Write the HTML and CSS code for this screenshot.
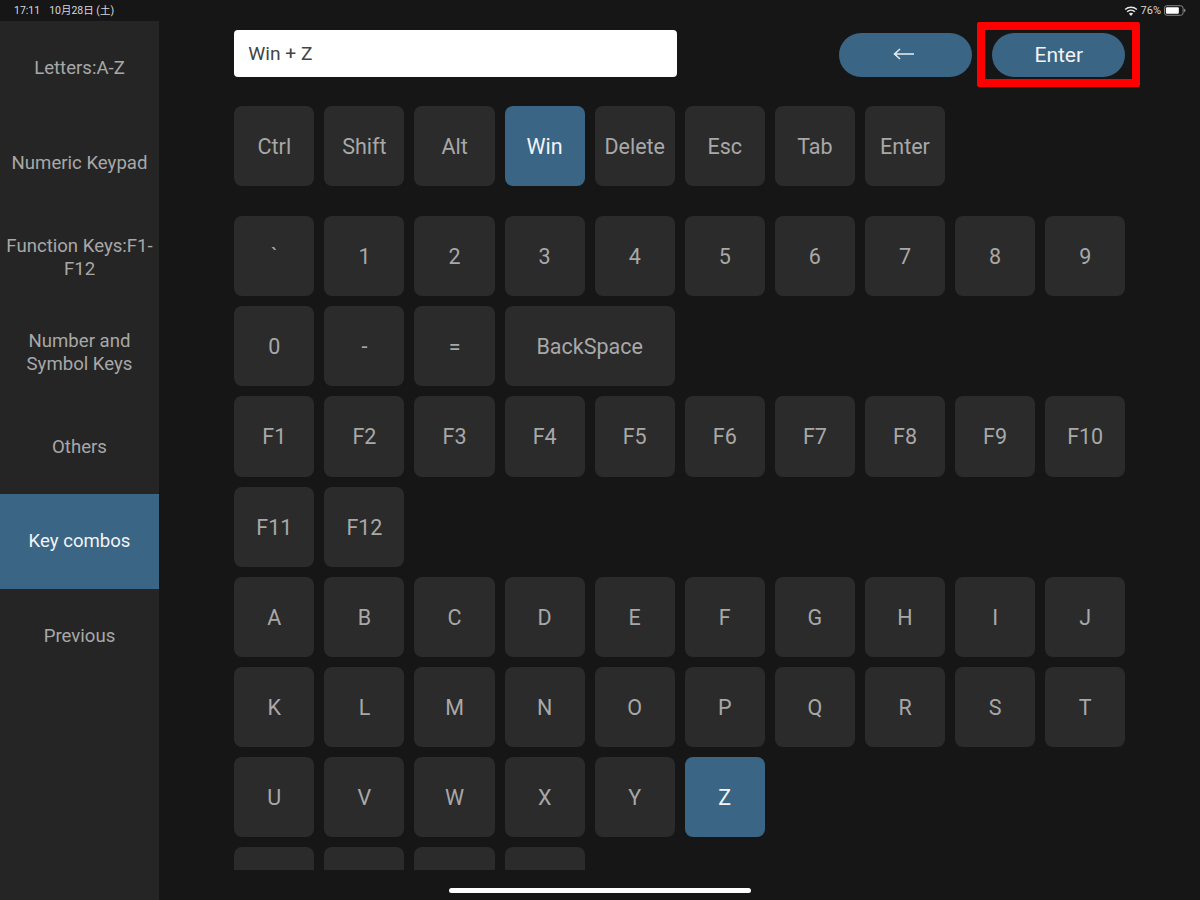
FILE: index.html
```html
<!DOCTYPE html>
<html lang="ja">
<head>
<meta charset="utf-8">
<title>Key combos</title>
<link rel="stylesheet" href="styles.css">
</head>
<body>
<div class="screen">
  <header class="status">
    <div class="status-left"><span>17:11</span><span>10月28日 (土)</span></div>
    <div class="status-right">
      <svg class="wifi" viewBox="0 0 14 10" width="14" height="10"><path d="M7 10 4.9 7.6a3.2 3.2 0 0 1 4.2 0Z" fill="#e8e8e8"/><path d="M3.6 6.3a5 5 0 0 1 6.8 0l1-1.1a6.6 6.6 0 0 0-8.8 0Z" fill="#e8e8e8"/><path d="M1.6 4.1a8 8 0 0 1 10.8 0l1-1.1a9.6 9.6 0 0 0-12.8 0Z" fill="#e8e8e8"/></svg>
      <span>76%</span>
      <svg class="battery" viewBox="0 0 23 11" width="22" height="11"><rect x=".5" y=".5" width="19.5" height="10" rx="2.6" fill="none" stroke="#8a8a8a"/><rect x="2" y="2" width="13.5" height="7" rx="1.2" fill="#fff"/><path d="M21 3.8c1 .2 1.5.9 1.5 1.7s-.5 1.5-1.5 1.7Z" fill="#8a8a8a"/></svg>
    </div>
  </header>
  <div class="layout">
    <nav class="sidebar">
      <div class="nav-item">Letters:A-Z</div>
      <div class="nav-item">Numeric Keypad</div>
      <div class="nav-item">Function Keys:F1-F12</div>
      <div class="nav-item">Number and Symbol Keys</div>
      <div class="nav-item">Others</div>
      <div class="nav-item active">Key combos</div>
      <div class="nav-item">Previous</div>
    </nav>
    <main class="main">
      <div class="topbar">
        <div class="input">Win + Z</div>
        <div class="actions">
          <div class="pill back"><svg viewBox="0 0 21 12" width="21" height="12"><path d="M21 6H2M7 1 1.5 6 7 11" fill="none" stroke="#e6edf2" stroke-width="1.5"/></svg></div>
          <div class="pill">Enter</div>
        </div>
      </div>
      <div class="keys modifiers">
        <div class="key">Ctrl</div><div class="key">Shift</div><div class="key">Alt</div><div class="key on">Win</div><div class="key">Delete</div><div class="key">Esc</div><div class="key">Tab</div><div class="key">Enter</div>
      </div>
      <div class="keys">
        <div class="key">`</div><div class="key">1</div><div class="key">2</div><div class="key">3</div><div class="key">4</div><div class="key">5</div><div class="key">6</div><div class="key">7</div><div class="key">8</div><div class="key">9</div>
        <div class="key">0</div><div class="key">-</div><div class="key">=</div><div class="key wide">BackSpace</div>
        <div class="key first">F1</div><div class="key">F2</div><div class="key">F3</div><div class="key">F4</div><div class="key">F5</div><div class="key">F6</div><div class="key">F7</div><div class="key">F8</div><div class="key">F9</div><div class="key">F10</div>
        <div class="key">F11</div><div class="key">F12</div>
        <div class="key first">A</div><div class="key">B</div><div class="key">C</div><div class="key">D</div><div class="key">E</div><div class="key">F</div><div class="key">G</div><div class="key">H</div><div class="key">I</div><div class="key">J</div>
        <div class="key">K</div><div class="key">L</div><div class="key">M</div><div class="key">N</div><div class="key">O</div><div class="key">P</div><div class="key">Q</div><div class="key">R</div><div class="key">S</div><div class="key">T</div>
        <div class="key">U</div><div class="key">V</div><div class="key">W</div><div class="key">X</div><div class="key">Y</div><div class="key on">Z</div>
        <div class="key first"></div><div class="key"></div><div class="key"></div><div class="key"></div>
      </div>
    </main>
  </div>
  <div class="highlight"></div>
  <div class="home"></div>
</div>
</body>
</html>
```
FILE: styles.css
```css
* { box-sizing: border-box; }
html, body { margin: 0; padding: 0; }
body { background: #161616; }
.screen {
  position: relative;
  width: 1200px;
  height: 900px;
  overflow: hidden;
  background: #161616;
  font-family: Roboto, "Noto Sans CJK JP", sans-serif;
  color: #a8a8a8;
}
.status {
  height: 21px;
  padding: 0 14px;
  display: flex;
  justify-content: space-between;
  align-items: center;
  font-size: 10.5px;
  line-height: 12px;
  color: #d8d8d8;
}
.status-left { display: flex; gap: 9px; }
.status-right { display: flex; align-items: center; gap: 3px; font-size: 11px; }
.layout { display: flex; height: 879px; }
.sidebar { width: 159px; flex: none; background: #252525; }
.nav-item {
  height: 94.6px;
  padding: 1px 5px 0;
  display: flex;
  align-items: center;
  justify-content: center;
  text-align: center;
  font-size: 18.6px;
  line-height: 23px;
}
.nav-item.active { background: #3a6585; color: #f2f4f6; }
.main {
  flex: 1;
  height: 849px;
  padding: 9px 0 0 75.3px;
  overflow: hidden;
}
.topbar { display: flex; justify-content: space-between; width: 891px; height: 47px; }
.input {
  width: 443px;
  height: 47px;
  background: #fff;
  border-radius: 4px;
  padding-left: 14px;
  display: flex;
  align-items: center;
  font-size: 19.2px;
  color: #444;
}
.actions { display: flex; gap: 20px; padding-top: 3px; }
.pill {
  width: 133px;
  height: 44px;
  border-radius: 22px;
  background: #3a6585;
  color: #f2f4f6;
  font-size: 21px;
  display: flex;
  align-items: center;
  justify-content: center;
}
.pill.back { padding: 0 5px 2px 0; }
.keys {
  display: grid;
  grid-template-columns: repeat(10, 80.1px);
  grid-auto-rows: 80.2px;
  gap: 10px;
  width: 891px;
}
.modifiers { margin: 29px 0 29.8px; }
.key {
  background: #2b2b2b;
  border-radius: 8px;
  padding-top: 1px;
  display: flex;
  align-items: center;
  justify-content: center;
  font-size: 21.5px;
}
.key.first { grid-column-start: 1; }
.key.wide { grid-column: span 2; }
.key.on { background: #3a6585; color: #f2f4f6; }
.highlight {
  position: absolute;
  left: 977px;
  top: 22px;
  width: 163px;
  height: 65px;
  border: 8px solid #ff0000;
  border-radius: 2px;
}
.home {
  position: absolute;
  left: 449px;
  top: 888px;
  width: 302px;
  height: 5px;
  border-radius: 3px;
  background: #fff;
}
```
